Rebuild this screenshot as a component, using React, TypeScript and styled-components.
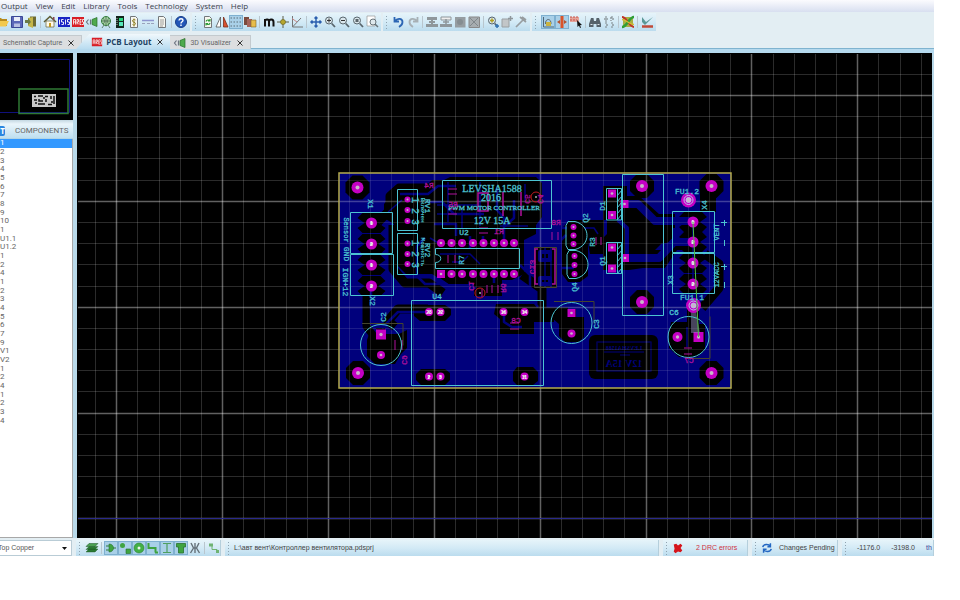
import React from 'react';
import styled, { createGlobalStyle, css } from 'styled-components';

const GlobalStyle = createGlobalStyle`
  * { box-sizing: border-box; }
  body { margin: 0; background: #fff; font-family: "Open Sans", sans-serif; font-size: 8px; color: #444; }
  button, select { font: inherit; color: inherit; border: 0; background: none; padding: 0; margin: 0; }
  ul { list-style: none; margin: 0; padding: 0; }
`;

const Window = styled.div`
  display: flex;
  flex-direction: column;
  height: calc(100vh - 44px);
  min-height: 440px;
  margin-right: 26px;
  overflow: hidden;
  background: #e3eef3;
`;

const MenuBar = styled.nav`
  display: flex;
  flex: none;
  gap: 8px;
  height: 12px;
  padding-left: 1px;
  background: linear-gradient(#fbfbfe, #d8dff0);
`;

const MenuButton = styled.button`
  height: 12px;
  line-height: 12px;
  white-space: nowrap;
  color: #3a3f4c;
`;

const ToolBar = styled.div`
  display: flex;
  flex: none;
  gap: 2px;
  height: 20px;
  padding-top: 1px;
  margin-left: -4px;
`;

const ToolGroup = styled.div`
  display: flex;
  align-items: center;
  height: 18px;
  padding-right: 2px;
  background: linear-gradient(#e6f4fa, #d3eaf6 50%, #bbdcee);
`;

const Grip = styled.span`
  flex: none;
  width: 9px;
  height: 14px;
  background: radial-gradient(circle, #8fa3b0 1px, transparent 1px) 2px 0 / 3px 3px repeat-y;
`;

const Separator = styled.span`
  flex: none;
  width: 1px;
  height: 12px;
  margin: 0 2px;
  background: #b9c6ce;
`;

const ToolButton = styled.button<{ $active?: boolean }>`
  display: grid;
  place-items: center;
  flex: none;
  width: 14px;
  height: 14px;
  ${(p) => p.$active && css`
    background: #a9d0e8;
    box-shadow: inset 0 0 0 1px #7fb0d0;
  `}
`;

const Glyph = styled.svg<{ $size: number }>`
  display: block;
  flex: none;
  width: ${(p) => p.$size}px;
  height: ${(p) => p.$size}px;
`;

const TabBar = styled.div`
  display: flex;
  flex: none;
  align-items: flex-end;
  height: 21px;
  border-bottom: 4px solid #b5d9ee;
  box-shadow: inset 0 -1px #7fb3cf;
`;

const TabItem = styled.div<{ $active?: boolean }>`
  display: flex;
  align-items: center;
  gap: 3px;
  height: 14px;
  padding: 0 6px 0 3px;
  font: 400 7px/12px Roboto, sans-serif;
  color: #666;
  background: #dcdee0;
  border: 1px solid #c3cace;
  border-width: 1px 1px 0 0;
  ${(p) => p.$active && css`
    height: 15px;
    margin-left: -6px;
    padding-left: 15px;
    font: 700 8px/12px "Open Sans", sans-serif;
    color: #1e4263;
    border: 0;
    background: linear-gradient(#f0f8fc, #b9dcf0);
    clip-path: polygon(0 100%, 13px 0, 100% 0, 100% 100%);
  `}
`;

const TabLabel = styled.button`
  white-space: nowrap;
  line-height: 12px;
`;

const CloseButton = styled.button`
  display: grid;
  place-items: center;
  width: 8px;
  height: 8px;
  margin-left: 2px;
  color: #333;
`;

const Workspace = styled.main`
  display: flex;
  flex: 1;
  min-height: 0;
`;

const Sidebar = styled.aside`
  display: flex;
  flex-direction: column;
  flex: none;
  width: 77px;
  border-right: 4px solid #b9d9e9;
  background: #fff;
`;

const Overview = styled.svg`
  display: block;
  flex: none;
  width: 73px;
  height: 67px;
  background: #000;
`;

const PanelHeader = styled.header`
  display: flex;
  align-items: center;
  gap: 10px;
  flex: none;
  height: 19px;
  padding-top: 3px;
  border-bottom: 1px solid #b3d4e4;
  background: linear-gradient(#c3d7e1, #eaf5fb 4px, #bedff0);
`;

const PickButton = styled.button`
  width: 5px;
  height: 10px;
  line-height: 10px;
  border-radius: 0 2px 2px 0;
  background: #2a86e0;
  color: #fff;
  font-weight: 700;
  overflow: hidden;
`;

const PanelTitle = styled.h2`
  margin: 0;
  font: 400 8px/12px Roboto, sans-serif;
  color: #666;
`;

const ComponentList = styled.ul`
  display: grid;
  flex: none;
  grid-auto-rows: 1fr;
  height: 286px;
  border-right: 1px solid #a8a8a8;
`;

const ComponentRow = styled.li<{ $selected?: boolean }>`
  display: flex;
  align-items: center;
  min-height: 0;
  font: 400 8px/8px Roboto, sans-serif;
  color: ${(p) => (p.$selected ? '#fff' : '#666')};
  background: ${(p) => (p.$selected ? '#3399ff' : 'transparent')};
`;

const ListRest = styled.div`
  flex: 1;
  border-right: 1px solid #a8a8a8;
  border-bottom: 1px solid #a8a8a8;
`;

const BoardCanvas = styled.svg`
  display: block;
  flex: 1;
  min-width: 0;
  height: 100%;
  background: #000;
  border-right: 2px solid #b9d9e9;
`;

const StatusBar = styled.footer`
  display: flex;
  flex: none;
  gap: 4px;
  height: 18px;
  padding-top: 2px;
  white-space: nowrap;
  font: 400 7px/12px "Liberation Sans", sans-serif;
`;

const StatusGroup = styled.div<{ $width?: number; $grow?: boolean }>`
  display: flex;
  align-items: center;
  flex: ${(p) => (p.$grow ? '1' : 'none')};
  ${(p) => p.$width && css`width: ${p.$width}px;`}
  min-width: 0;
  overflow: hidden;
  border-right: 1px solid #b5cfdc;
  background: linear-gradient(#e6f4fa, #d3eaf6 50%, #bbdcee);
`;

const LayerBox = styled.label`
  position: relative;
  display: flex;
  align-items: center;
  flex: none;
  width: 72px;
  height: 16px;
  background: #fff;
  border: 1px solid #b9ccd6;
  border-left: 0;
`;

const LayerSelect = styled.select`
  appearance: none;
  width: 100%;
  height: 14px;
  line-height: 14px;
  margin-left: -2px;
  color: #555;
`;

const SelectArrow = styled.svg`
  position: absolute;
  right: 4px;
  top: 6px;
  width: 5px;
  height: 3px;
  pointer-events: none;
`;

const StatusText = styled.span<{ $tone?: string; $left?: number }>`
  color: ${(p) => p.$tone ?? '#444'};
  margin-left: ${(p) => p.$left ?? 0}px;
`;

/* ---------- icons ---------- */

const lens = (inner: React.ReactNode) => (
  <>
    <circle cx="6" cy="5.5" r="3.5" fill="#d9e6ec" stroke="#59666d" />
    <path d="M8.7 8.5 12 12" stroke="#59666d" strokeWidth="1.8" />
    {inner}
  </>
);
const sheet = (inner: React.ReactNode) => (
  <>
    <path d="M3.5 1.5h5l2 2v9h-7z" fill="#f7f7f0" stroke="#73777a" />
    {inner}
  </>
);
const undoPath = 'M2.500 2v4.500H7M3 6C5 3 10.500 3 10.500 7c0 2-1 3.500-3.500 5';

const icons: Record<string, React.ReactNode> = {
  open: <><path d="M1 3h4l1 1h5v7H1z" fill="#b78a1c" /><path d="M3 6h10l-3 5.500H1z" fill="#f3c94d" /></>,
  save: <><path d="M1.500 1.500h11v11h-11z" fill="#5a67b8" stroke="#3a4796" /><path d="M4 2h6v4H4z" fill="#e9edf8" /><path d="M4 8.500h6V12H4z" fill="#b8c0e2" /></>,
  exit: <><path d="M6 1.500h6v10H6z" fill="#6c6a32" /><path d="m4 3 5-1v11l-5-2z" fill="#c4b64a" /><path d="M1 5h3V3l3 4-3 3V8H1z" fill="#6b7b46" /></>,
  home: <><path d="M3 6h8v6H3z" fill="#fffbe8" stroke="#66603a" strokeWidth=".7" /><path d="M1 7 7 1.500 13 7" fill="none" stroke="#5d5b32" strokeWidth="1.500" /><path d="M6 8h2v4H6z" fill="#c49b1e" /><path d="M10 2h1.500v3H10z" fill="#845" /></>,
  isis: <><path d="M1 2h12v10H1z" fill="#1723c4" /><path d="M2.500 4.500v5M6.500 4.500h-2V7h2v2.500h-2M8.500 4.500v5M12.500 4.500h-2V7h2v2.500h-2" fill="none" stroke="#fff" strokeWidth=".9" /></>,
  ares: <><path d="M1 2h12v10H1z" fill="#d81f26" /><path d="M2.500 9.500v-5h2v5M2.500 7h2M6 9.500v-5h1.500V7L6 7.500l2 2M10.500 4.500H9v5h1.500M9 7h1.500M13 4.500h-1.500V7h1v2.500H11" fill="none" stroke="#fff" strokeWidth=".8" /></>,
  visual: <><path d="M7 4.500 12 2.500v9L7 9.500z" fill="#4faa4c" stroke="#286d2b" strokeWidth=".7" /><path d="M3.500 4.500 1.500 7l2 2.500M5.500 4.500v5" stroke="#6d7480" fill="none" strokeWidth="1.200" /></>,
  gerber: <><circle cx="7" cy="6" r="4.500" fill="#a6d6a3" stroke="#33803b" /><path d="M2.500 6h9M7 1.500v10M4 3c2 2 2 5 0 6M10 3c-2 2-2 5 0 6M3 13l2-3M11 13l-2-3" stroke="#4b6a54" fill="none" strokeWidth=".8" /></>,
  explorer: <><path d="M3 1h8v12H3z" fill="#12251b" /><path d="M6 3h4v3H6z" fill="#28d77f" /><path d="M6 7h4v4H6z" fill="#57e5b9" /><path d="M4 3v8" stroke="#ddd" strokeWidth=".8" strokeDasharray="1 1" /></>,
  cost: sheet(<path d="M8.500 5C7 4 5.500 4.500 5.500 6s3 1 3 2.500S6.500 10.500 5.500 9.500M7 3.500v8" stroke="#8a7a1c" fill="none" strokeWidth=".9" />),
  bom: <><path d="M1 5.500h12" stroke="#8d95cf" strokeWidth="1.500" /><path d="M1 8.500h3M6 8.500h3M10 8.500h3" stroke="#9aa3bb" /></>,
  doc: sheet(<path d="M5 5h4M5 7h4M5 9h4M5 11h3" stroke="#777" strokeWidth=".7" />),
  help: <><circle cx="7" cy="7" r="5.500" fill="#2257b8" stroke="#173c86" /><path d="M5 5.500C5.200 3 9 3.300 9 5.300 9 6.700 7 6.800 7 8.400M7 9.600v1.400" fill="none" stroke="#fff" strokeWidth="1.400" /></>,
  refresh: sheet(<path d="M5 6.500c.5-2 3-2 4-.5M9 8c-.5 2-3 2-4 .5M9 4v2H7M5 10.500v-2h2" stroke="#2c9a36" fill="none" strokeWidth="1.100" />),
  mirror: <><path d="M5.500 2v10H1z" fill="#fff" stroke="#555" strokeWidth=".8" /><path d="M8.500 2v10H13z" fill="#d9502e" stroke="#7c2c18" strokeWidth=".8" /></>,
  grid: <path d="M1.500 3h11M1.500 7h11M1.500 11h11" stroke="#5d6e79" strokeDasharray="1.500 1.500" />,
  layers: <><path d="M1 2h5v8H1z" fill="#7b4a3d" /><path d="M4 4h5v8H4z" fill="#a4635a" /><path d="M8 5h5v7H8z" fill="#e8bd4b" stroke="#7f6528" strokeWidth=".6" /></>,
  metric: <path d="M3 11.500V4M3 6c.5-2 4-2 4 .500v5M7 6.500c.5-3 4.500-2.500 4.500.500v4.500" fill="none" stroke="#111" strokeWidth="2" />,
  origin: <><path d="M7 1v12M1 7h12" stroke="#5d5d46" /><circle cx="7" cy="7" r="2.500" fill="#b8a82d" stroke="#6d6523" strokeWidth=".7" /></>,
  polar: <><path d="M2.500 1v11H13M2.500 12 11 3" stroke="#777" fill="none" /><path d="M2 3.500 7 7" stroke="#c88" /></>,
  pan: <path d="M7 2v10M2 7h10M5.500 3.500 7 2l1.500 1.500M5.500 10.500 7 12l1.500-1.500M3.500 5.500 2 7l1.500 1.500M10.500 5.500 12 7l-1.500 1.500" stroke="#2b5fae" fill="none" strokeWidth="1.500" />,
  zoomIn: lens(<path d="M6 3.500v4M4 5.500h4" stroke="#333" />),
  zoomOut: lens(<path d="M4 5.500h4" stroke="#333" />),
  zoomAll: lens(<path d="M4.500 4h3v3h-3z" fill="#5a656b" />),
  zoomArea: <><path d="M2 1h8v10H2z" fill="#fff" stroke="#999" strokeWidth=".7" /><circle cx="8" cy="7" r="3" fill="#dfe9ed" stroke="#68747a" /><path d="m10 9 3 3" stroke="#68747a" strokeWidth="1.500" /></>,
  undo: <path d={undoPath} fill="none" stroke="#2c66b4" strokeWidth="1.800" />,
  redo: <path d={undoPath} transform="matrix(-1 0 0 1 14 0)" fill="none" stroke="#a7b0b5" strokeWidth="1.800" />,
  blockCopy: <><path d="M2 2h10v3H2zM1 9h12v3H1z" fill="#8f979b" /><path d="M7 4v6M4 7h6" stroke="#8f979b" strokeWidth="2" /></>,
  blockMove: <><path d="M2 2h10v3H2z" fill="#eee" stroke="#8f979b" /><path d="M1 9h12v3H1z" fill="#8f979b" /><path d="M7 4v6M4 7h6" stroke="#8f979b" strokeWidth="1.500" /></>,
  blockRotate: <><path d="M2 2h10.500v10.500H2z" fill="#969da1" /><circle cx="7" cy="7" r="3" fill="#858d91" /></>,
  blockDelete: <><path d="M2 2h10.500v10.500H2z" fill="#a7adb0" stroke="#888" /><path d="m3 3 8 8M11 3l-8 8" stroke="#80878b" /></>,
  pick: lens(<><path d="M6 3.500v4M4 5.500h4" stroke="#b0a020" strokeWidth="1.500" /><path d="M9 11h4M11 9v4" stroke="#3577b8" strokeWidth="1.500" /></>),
  make: <><path d="M2 4h7v8H2z" fill="#c2c6c8" stroke="#9aa0a3" /><path d="M8 3.500h5M10.500 1v5" stroke="#8f979b" strokeWidth="1.500" /></>,
  hammer: <path d="M2 12 9 5M6 2l6 5M8 2l4 3" stroke="#979da0" strokeWidth="1.700" fill="none" />,
  lock: <><path d="M2.500 2v10H13" stroke="#4f6878" fill="none" /><path d="M4.500 9C4 3 10.500 3 10 9" stroke="#596770" fill="none" /><path d="M5 7h5v4H5z" fill="#c9b340" /></>,
  trace: <><path d="M5.500 1h3v12h-3z" fill="#d9542b" /><path d="m2 7 3-2v4zM12 7 9 5v4z" fill="#b5522f" /></>,
  tidy: <><path d="M1 2h9v5H1z" fill="#e4a39a" /><path d="M1 2h9M1 5h7" stroke="#c65448" strokeDasharray="2 1" /><path d="m8 5 5 5-2 .2 1 2.300-1 .5-1-2.500L8.500 12z" fill="#111" /></>,
  find: <><path d="M3 3h2.500l.5 3h2l.5-3H11l2 6v3H8.500V9h-3v3H1V9z" fill="#56626a" /><path d="M2.500 9.500h2M9.500 9.500h2" stroke="#dce5ea" /></>,
  annotate: <path d="M3 2h2v4H3zM3 8h2v4H3M9 2v4M9 2h2v4M9 12h2V8H9" fill="none" stroke="#7d8589" strokeWidth="1.200" strokeDasharray="2 1" />,
  router: <><path d="M2 2h10v10H2z" fill="#a8b043" /><path d="M1 2c5 0 7 10 12 10" stroke="#c0342a" fill="none" strokeWidth="2" /><path d="M1 12C6 12 8 2 13 2" stroke="#2f9e37" fill="none" strokeWidth="2.500" /><path d="M1 4.500c4 0 7 5 12 5" stroke="#d4bd35" fill="none" strokeWidth="1.300" /></>,
  check: <><path d="M2 2v5l3 3 8-8-7 5z" fill="#5b9896" /><path d="M2 11.500h11" stroke="#c04a38" strokeWidth="2.500" /></>,
  stack: <><path d="m1 11 3-3h9l-3 3zM1 8.500l3-3h9l-3 3z" fill="#2a7a33" stroke="#195422" strokeWidth=".4" /><path d="m1 5.500 3-3h9l-3 3z" fill="#4aa052" stroke="#195422" strokeWidth=".5" /></>,
  gate: <><path d="M5 3c6 0 6 8 0 8z" fill="#3fa441" stroke="#2a7230" strokeWidth=".6" /><path d="M2 5h3M2 9h3M9 7h3" stroke="#2f7a38" /></>,
  parts: <><circle cx="4.500" cy="4.500" r="2.500" fill="#3fa441" /><path d="M8 8h4.500v4.500H8z" fill="#3fa441" stroke="#276d2c" strokeWidth=".6" /></>,
  pad: <><circle cx="7" cy="7" r="5" fill="#43b046" stroke="#2a8030" strokeWidth=".6" /><circle cx="7" cy="7" r="1.500" fill="#e9f6e9" /></>,
  track: <path d="M2.500 2v5h7v4.500M9 11.500h3" stroke="#3ea341" fill="none" strokeWidth="2" />,
  ratsnest: <path d="M3 2.500h8M3 11.500h8M7 3v8" stroke="#4f9f60" fill="none" strokeWidth="1.200" />,
  zone: <path d="M2.500 2.500h9V6H9.500v6h-5V6h-2z" fill="#3fa441" stroke="#2a7230" strokeWidth=".8" />,
  cross: <path d="M7 2v10M3 2 5.500 7 2.500 12M11 2 8.500 7l3 5M5 7h4" stroke="#65727a" fill="none" strokeWidth="1.400" />,
  link: <><path d="M2 2.500h4v3H2zM9 9h3v3H9z" fill="#6fb373" /><path d="M5 5v3.500h5V10" stroke="#6fb373" fill="none" /></>,
  error: <path d="m2 3 3-1 2 2 3-2 2 2-2 3 2 3-2 2-3-1-3 2-2-2 1-3z" fill="#d5141b" />,
  sync: <path d="M2 6c1-4 7-4 9-1M11 1.500V5.500H7.500M12 8c-1 4-7 4-9 1M3 12.500V8.500h3.500" stroke="#2367c2" fill="none" strokeWidth="1.700" />,
};

const Icon = ({ name, size = 14 }: { name: string; size?: number }) => (
  <Glyph $size={size} viewBox="0 0 14 14" aria-hidden="true">{icons[name]}</Glyph>
);

const Tools = ({ names, active = [] }: { names: string[]; active?: string[] }) => (
  <>
    {names.map((name, i) =>
      name === '|' ? <Separator key={i} /> : (
        <ToolButton key={i} type="button" aria-label={name} $active={active.includes(name)}>
          <Icon name={name} />
        </ToolButton>
      ),
    )}
  </>
);

const Close = () => (
  <CloseButton type="button" aria-label="Close tab">
    <svg width="6" height="6" viewBox="0 0 6 6"><path d="m.5.5 5 5M5.500.5l-5 5" stroke="currentColor" /></svg>
  </CloseButton>
);

/* ---------- circuit board ---------- */

const CYAN = '#4cc4d2';
const PINK = '#c400c4';
const MAGENTA = '#b0109c';
const COPPER = '#00007c';

type PadProps = { x: number; y: number; r?: number; square?: boolean; label?: string };
const Pad = ({ x, y, r = 3, square, label }: PadProps) => (
  <g>
    {square ? <rect x={x - r} y={y - r} width={r * 2} height={r * 2} fill={PINK} /> : <circle cx={x} cy={y} r={r} fill={PINK} />}
    <circle cx={x} cy={y} r={r / 3} fill="#c9b6c9" />
    {label && <text x={x} y={y + 2} fontSize="5" fontWeight="700" fontFamily='"Liberation Sans", sans-serif' textAnchor="middle" fill="#fff">{label}</text>}
  </g>
);

type MarkProps = { x: number; y: number; turn?: number; size?: number; fill?: string; flip?: boolean; serif?: boolean; bold?: boolean; children: string };
const Mark = ({ x, y, turn = 0, size = 8, fill = CYAN, flip, serif, bold, children }: MarkProps) => (
  <text
    transform={`translate(${x} ${y}) rotate(${turn})${flip ? ' scale(-1 1)' : ''}`}
    fontSize={size}
    fontWeight={bold ? 700 : 400}
    fontFamily={serif ? '"Liberation Serif", serif' : '"Liberation Mono", monospace'}
    textAnchor="middle"
    dominantBaseline="central"
    fill={fill}
    stroke={fill}
    strokeWidth={bold ? 0 : 0.3}
  >
    {children}
  </text>
);

const PITCH = 105.87;
const columns = Array.from({ length: 120 }, (_, i) => ({ at: Math.round(95 + (i * PITCH) / 5) + 0.5, major: i % 5 === 1 }));
const rows = Array.from({ length: 80 }, (_, i) => ({ at: Math.round(73.800 + (i * PITCH) / 5) + 0.5, major: i % 5 === 1 }));

const GridLines = ({ opacity = 1 }: { opacity?: number }) => (
  <g fill="none" stroke="#fff" opacity={opacity}>
    {columns.map((c) => <path key={c.at} d={`M${c.at} 54V2000`} strokeOpacity={c.major ? 0.38 : 0.17} strokeWidth={c.major ? 1.500 : 1} />)}
    {rows.map((r) => <path key={r.at} d={`M78 ${r.at}H3000`} strokeOpacity={r.major ? 0.38 : 0.17} strokeWidth={r.major ? 1.500 : 1} />)}
  </g>
);

const cornerPads = [[357.5, 187.5], [711.5, 186], [358, 373], [711.5, 373], [642, 186], [642, 302]];
const terminalPads = [[371.5, 223, '1'], [371.5, 244, '2'], [371.5, 265, '1'], [371.5, 286, '2'], [693, 222, '1'], [693, 242, '2'], [693, 263, '1'], [693, 284, '2']] as [number, number, string][];
const dipX = [441, 451.5, 462, 473, 483.5, 494, 504, 514];

const Copper = () => (
  <g>
    <rect x="339" y="173" width="392" height="215" fill={COPPER} />
    <g fill="#000">
      {cornerPads.map(([x, y]) => <path key={`${x}-${y}`} d={`M${x - 5} ${y - 12}h10l7 7v10l-7 7h-10l-7-7v-10z`} />)}
      {terminalPads.map(([x, y]) => <path key={`${x}-${y}`} d={`M${x - 9} ${y - 10}h18l5 5-7 5 7 5-5 5h-18l-5-5 7-5-7-5z`} />)}
      <path d="M384 204l14-16h26l8-8h12l6-3h86l6 6v34l-6 8v9l-12 6v34l-12 6h-10v16h-28v-12h-26l-16-10h-26l-12-12v-38l-10-6z" />
      <path d="M534 248h22v40h-22zM562 228l8-8h14l4 10v46l-8 6h-12l-6-8zM584 220h20v34h-14z" />
      <path d="M603 186h24v10h12l20 18h16v14h-14v16l-10 10v-4h14l10-12h18v12h-16l-12 18h-22l-14 2h-26v-32l4-4v-14h-4z" />
      <path d="M627 212h10l18 16h18v14l-14 2-8 8h-24zM700 190h16v22h-16z" />
      <path d="M420 305h25l6 4v6l-6 6h-25l-6-5v-6zM421 369h24l5 4v7l-5 5h-24l-5-5v-6zM517 367h16l5 5v9l-5 4h-16l-4-4v-9z" />
      <path d="M496 304h42l16 8v10h-20v12h-34v-15l-6-5zM552 309h24v8h8v20l-5 5h-14l-6-6v-12l-7-6z" />
      <path d="M371 328h14v6h14l8-4v18l-6 6-6 10h-20l-8-8v-16zM671 322h16v-20h12v22h6v26l-8 7h-18l-10-9v-16z" />
      <rect x="589" y="335" width="69" height="44" rx="6" />
    </g>
    <g fill="none" stroke="#000" strokeWidth="9" strokeLinejoin="round">
      <path d="M378 222 390 210V196l9-8h30M367 290v36l6 8M393 225v44l12 14h24l14 10M395 327l-7-6 10-12h30M540 312h28M522 275l20 14v20M705 254l14 10v24l-17 20" />
    </g>
    <g fill="none" stroke={COPPER} strokeLinejoin="round">
      <path strokeWidth="8" d="M624 204h14l17 17h36M625 258h34l15-16h18" />
      <path strokeWidth="4" d="M618 220l9 8v32" />
      <path strokeWidth="2.500" d="M400 194h28l10-8h18M428 202h14l12 12h30M434 224h22v12M470 236v12M483 236v8M497 188v22l7 8v22M514 200v18l-9 8M438 278l14 10h24M494 275v8M520 265l10 10v22l8 10M556 245l10-10M525 243l26-15h16M556 268h18M425 238l-8 8v30l8 8h16M371 290v34l9 12M382 328l16-16h30M504 316v6l8 5h10" />
      <path strokeWidth="1.500" d="M388 212l14-12M437 205h40M437 214h30M448 182v40M462 210v18M480 182v44M500 226h28M525 184v16M430 238l10 6M440 254h30l10 10M452 262h10l6-6M545 240v48M551 240v48M693 225v56M687 327v20M584 228h10l4 6" />
      <path strokeWidth="4" d="M540 252v8h10v-8zM540 278v6h10v-6z" />
      <rect x="597" y="342" width="54" height="29" strokeWidth="1.500" strokeOpacity=".7" />
      <path strokeWidth="1" d="M604 352h40M620 355h10" />
    </g>
    <Mark x={624} y={363} size={10} fill={COPPER} flip serif bold>12V 15A</Mark>
    <Mark x={624} y={348} size={6} fill={COPPER} flip serif bold>LEVSHA1588</Mark>
  </g>
);

const resistors = ['M448 189h9M448 194h9M448 209h9M448 214h9M479 228h9M479 233h9', 'M448 255v8M455 255v8M552 232v8M558 232v8M596 237v8M601 237v8M487 285v8M492 285v8M498 285v8M395 340v10M402 340v10M510 323h9M510 329h9M684 348h8M684 354h8M482 289v8'];

const Silk = () => (
  <g fill="none" stroke={CYAN} strokeWidth="1">
    <path d="M350.500 212.500h42v41h-42zM350.500 254.500h43v41h-43zM397.500 189.500h20v41h-20zM397.500 233.500h20v41h-20zM442.500 180.500h109v48h-109z" />
    <path d="M435.500 248.500h84v20h-84v-6c7 0 7-8 0-8zM411.500 300.500h132v85h-132z" />
    <circle cx="381" cy="345" r="20.500" /><circle cx="571.500" cy="323" r="20.500" /><circle cx="688.500" cy="337" r="20.500" />
    <path d="M568 221.500h7c16 4 16 24 0 28h-7l-2-4v-20zM569 250.500h7c16 4 16 24 0 28h-7l-2-4v-20z" />
    <path d="M606.500 188.500h15V220h-15zM606.500 242.500h15v31h-15zM617.500 188v32M617.500 242v31M622.500 174.500h41V315.500h-41z" />
    <path d="m617 196 5-6m-5 12 5-6m-5 12 5-6m-5 12 5-6m-5 12 5-6M617 250l5-6m-5 12 5-6m-5 12 5-6m-5 12 5-6m-5 12 5-6" />
    <path d="M672.500 211.500h42v41h-42zM672.500 253.500h42v40h-42zM721 222.500h6M724.500 220v6M724.500 240v6M721 266.500h6M724.500 264v6M724.500 282v6" />
  </g>
);

const Board = () => (
  <g>
    <GridLines />
    <path d="M78 518.500H3000" stroke="#2a2a8c" />
    <Copper />
    <svg x="339" y="173" width="392" height="215" viewBox="339 173 392 215"><GridLines opacity={0.65} /></svg>
    <g fill="none" stroke="#45452f">
      <path d="M362 323.500h41v22M554 301.500h40v22M688 358.500h22v-42M534.500 247.500h22v40h-22z" />
    </g>
    <g fill="none" stroke={MAGENTA}>
      {resistors.map((d) => <path key={d} d={d} />)}
      <path d="M538 249h-3v35h3M552 249h3v35h-3M503 192v24M521 192v24M478 193h10v18h-10z" strokeWidth="1.500" />
    </g>
    <rect x="339" y="173" width="392" height="215" fill="none" stroke="#b5ac4c" strokeWidth="1.500" />
    {cornerPads.map(([x, y]) => <Pad key={`${x}-${y}`} x={x} y={y} r={6} />)}
    {terminalPads.map(([x, y, label]) => <Pad key={`${x}-${y}`} x={x} y={y} r={5.500} label={label} />)}
    {[199.5, 210, 221, 243.5, 254, 264].map((y) => <Pad key={y} x={407.5} y={y} />)}
    {dipX.map((x, i) => <g key={x}><Pad x={x} y={243} r={4} /><Pad x={x} y={274} r={4} square={i === 0} /></g>)}
    {[227, 235.5, 244].map((y) => <Pad key={y} x={573.5} y={y} />)}
    {[256, 265, 274].map((y) => <Pad key={y} x={574.5} y={y} />)}
    {[[612, 193.5], [612, 215], [624.5, 204], [612, 247.5], [612, 268.5], [625, 258]].map(([x, y]) => <Pad key={`${x}-${y}`} x={x} y={y} r={4} square />)}
    {([[429, 312, '23'], [440.5, 312, '22'], [503.5, 312, '16'], [524.5, 312, '14'], [429, 376.5, '2'], [440.5, 376.5, '3'], [524.5, 376.5, '11']] as [number, number, string][]).map(([x, y, n]) => <Pad key={`${x}-${y}`} x={x} y={y} r={4} label={n} />)}
    <Pad x={381} y={334.5} r={5} square /><Pad x={381} y={355} r={4} />
    <Pad x={571.5} y={313} r={4} square /><Pad x={571.5} y={333.5} r={4} />
    <Pad x={677.5} y={337} r={5} /><Pad x={698.5} y={337} r={5} square />
    <path d="M691 312h5l4 21h-9z" fill="#8e88b8" opacity=".5" />
    <Pad x={688.5} y={200} r={7.500} /><Pad x={693.5} y={305.5} r={7.500} />
    <g fill="none" stroke="#b9c3ee"><circle cx="688.500" cy="200" r="4.500" /><circle cx="693.500" cy="305.500" r="4.500" /><circle cx="688.500" cy="200" r="2.500" /><circle cx="693.500" cy="305.500" r="2.500" /></g>
    <Silk />
    <path d="M693 222 698.500 337" stroke="#4fbf45" />
    <g fill="none" stroke="#c21a22"><circle cx="536" cy="197" r="5" /><circle cx="480" cy="293" r="5" /></g>
    <path d="M536 196v2M480 292v2" stroke="#fff" />

    <Mark x={492} y={188} size={10} serif>LEVSHA1588</Mark>
    <Mark x={491} y={197} size={10} serif>2016</Mark>
    <Mark x={494} y={208} size={7} serif>PWM MOTOR CONTROLLER</Mark>
    <Mark x={492} y={220} size={10} serif>12V 15A</Mark>
    <Mark x={346} y={230} turn={90} size={7}>Sensor</Mark>
    <Mark x={346} y={254} turn={90}>GND</Mark>
    <Mark x={345} y={282} turn={90}>IGN+12</Mark>
    <Mark x={370} y={204} turn={90}>X1</Mark>
    <Mark x={372} y={301} turn={90}>X2</Mark>
    <Mark x={427} y={206} turn={90}>RV1</Mark>
    <Mark x={427} y={250} turn={90}>RV2</Mark>
    <Mark x={422} y={210} turn={90} size={6} bold>Включен</Mark>
    <Mark x={422} y={252} turn={90} size={6} bold>Мощность</Mark>
    {['1', '2', '3'].map((n, i) => (
      <g key={n}>
        <Mark x={414} y={200 + i * 11} turn={90} size={10}>{n}</Mark>
        <Mark x={414} y={243 + i * 11} turn={90} size={10}>{n}</Mark>
      </g>
    ))}
    <Mark x={464} y={232}>U2</Mark>
    <Mark x={437} y={296}>U4</Mark>
    <Mark x={461} y={260} turn={-90}>R7</Mark>
    <Mark x={383} y={317} turn={-90}>C2</Mark>
    <Mark x={596} y={324} turn={-90}>C3</Mark>
    <Mark x={674} y={312}>C6</Mark>
    <Mark x={585} y={218} turn={-90}>Q2</Mark>
    <Mark x={574} y={287} turn={-90}>Q4</Mark>
    <Mark x={592} y={242} turn={-90}>R3</Mark>
    <Mark x={602} y={206} turn={-90}>D1</Mark>
    <Mark x={602} y={261} turn={-90}>Q1</Mark>
    <Mark x={687} y={191}>FU1.2</Mark>
    <Mark x={692} y={297}>FU1.1</Mark>
    <Mark x={704} y={205} turn={-90}>X4</Mark>
    <Mark x={670} y={280} turn={-90}>X3</Mark>
    <Mark x={717} y={232} turn={-90} size={7}>VENT</Mark>
    <Mark x={717} y={275} turn={-90} size={7}>12VACC</Mark>
    <Mark x={429} y={185} fill={MAGENTA} flip>R4</Mark>
    <Mark x={453} y={204} fill={MAGENTA} flip>R5</Mark>
    <Mark x={499} y={231} fill={MAGENTA} flip>R1</Mark>
    <Mark x={556} y={222} fill={MAGENTA} flip>R8</Mark>
    <Mark x={527} y={199} turn={90} fill={MAGENTA} flip>C5</Mark>
    <Mark x={540} y={199} turn={90} fill={MAGENTA} flip>C4</Mark>
    <Mark x={532} y={267} turn={90} fill={MAGENTA} flip>C13</Mark>
    <Mark x={471} y={286} turn={90} fill={MAGENTA} flip>C1</Mark>
    <Mark x={503} y={288} turn={90} fill={MAGENTA} flip>R6</Mark>
    <Mark x={516} y={320} fill={MAGENTA} flip>C8</Mark>
    <Mark x={404} y={360} turn={90} fill={MAGENTA} flip>C9</Mark>
    <Mark x={689} y={360} fill={MAGENTA} flip>C7</Mark>
  </g>
);

const menus = ['Output', 'View', 'Edit', 'Library', 'Tools', 'Technology', 'System', 'Help'];
const components = ['1', '2', '3', '4', '5', '6', '7', '8', '9', '10', '1', 'U1.1', 'U1.2', '1', '2', '4', '1', '2', '3', '4', '5', '6', '7', '9', 'V1', 'V2', '1', '2', '4', '1', '2', '3', '4'];

export default function App() {
  return (
    <>
      <GlobalStyle />
      <Window>
        <MenuBar>{menus.map((m) => <MenuButton key={m} type="button">{m}</MenuButton>)}</MenuBar>
        <ToolBar role="toolbar">
          <ToolGroup>
            <Tools names={['open', 'save', 'exit', '|', 'home', 'isis', 'ares', 'visual', 'gerber', 'explorer', 'cost', 'bom', 'doc', '|', 'help']} />
          </ToolGroup>
          <ToolGroup>
            <Grip />
            <Tools active={['grid']} names={['refresh', 'mirror', 'grid', 'layers', '|', 'metric', 'origin', 'polar', '|', 'pan', 'zoomIn', 'zoomOut', 'zoomAll', 'zoomArea']} />
          </ToolGroup>
          <ToolGroup>
            <Grip />
            <Tools names={['undo', 'redo', '|', 'blockCopy', 'blockMove', 'blockRotate', 'blockDelete', '|', 'pick', 'make', 'hammer']} />
          </ToolGroup>
          <ToolGroup>
            <Grip />
            <Tools active={['lock', 'trace']} names={['lock', 'trace', 'tidy', '|', 'find', 'annotate', '|', 'router', '|', 'check']} />
          </ToolGroup>
        </ToolBar>
        <TabBar>
          <TabItem><TabLabel type="button">Schematic Capture</TabLabel><Close /></TabItem>
          <TabItem $active><Icon name="ares" size={12} /><TabLabel type="button">PCB Layout</TabLabel><Close /></TabItem>
          <TabItem><Icon name="visual" /><TabLabel type="button">3D Visualizer</TabLabel><Close /></TabItem>
        </TabBar>
        <Workspace>
          <Sidebar>
            <Overview viewBox="0 0 73 67">
              <path d="M0 6.500h69.500v53H0" fill="none" stroke="#10107c" />
              <rect x="19" y="36" width="49" height="24.500" fill="none" stroke="#2f7a34" strokeWidth="1.500" />
              <path d="M32 41h24v13H32z" fill="#c9c9c9" />
              <path d="M34 43.500h2M38 43h5M45 43.500h3M51 43v3M54 43v8M34 47h3M35 50h2M39 46v2h4M46 46v3M38 51h7M48 51.500h4M43 45h2M51 49h2" stroke="#111" strokeWidth="1.500" fill="none" />
            </Overview>
            <PanelHeader><PickButton type="button">T</PickButton><PanelTitle>COMPONENTS</PanelTitle></PanelHeader>
            <ComponentList>
              {components.map((c, i) => <ComponentRow key={i} $selected={i === 0}>{c}</ComponentRow>)}
            </ComponentList>
            <ListRest />
          </Sidebar>
          <BoardCanvas role="img" aria-label="PCB layout">
            <g transform="translate(-77 -53)"><Board /></g>
          </BoardCanvas>
        </Workspace>
        <StatusBar>
          <LayerBox>
            <LayerSelect aria-label="Layer" defaultValue="Top Copper"><option>Top Copper</option><option>Bottom Copper</option></LayerSelect>
            <SelectArrow viewBox="0 0 5 3"><path d="M0 0h5L2.500 3z" fill="#111" /></SelectArrow>
          </LayerBox>
          <StatusGroup $width={145}>
            <Grip />
            <Tools names={['stack', '|', 'gate', 'parts', 'pad', 'track', 'ratsnest', 'zone', 'cross', '|', 'link']} active={['gate', 'parts', 'pad', 'track', 'ratsnest', 'zone']} />
          </StatusGroup>
          <StatusGroup $grow>
            <Grip /><StatusText>L:\авт вент\Контроллер вентилятора.pdsprj</StatusText>
          </StatusGroup>
          <StatusGroup $width={85}><Grip /><Icon name="error" size={12} /><StatusText $tone="#d0343f" $left={12}>2 DRC errors</StatusText></StatusGroup>
          <StatusGroup $width={86}><Grip /><Icon name="sync" size={12} /><StatusText $left={6}>Changes Pending</StatusText></StatusGroup>
          <StatusGroup $width={92}>
            <Grip /><StatusText $left={6}>-1176.0</StatusText><StatusText $left={11}>-3198.0</StatusText><StatusText $tone="#3b4a9c" $left={11}>th</StatusText>
          </StatusGroup>
        </StatusBar>
      </Window>
    </>
  );
}
